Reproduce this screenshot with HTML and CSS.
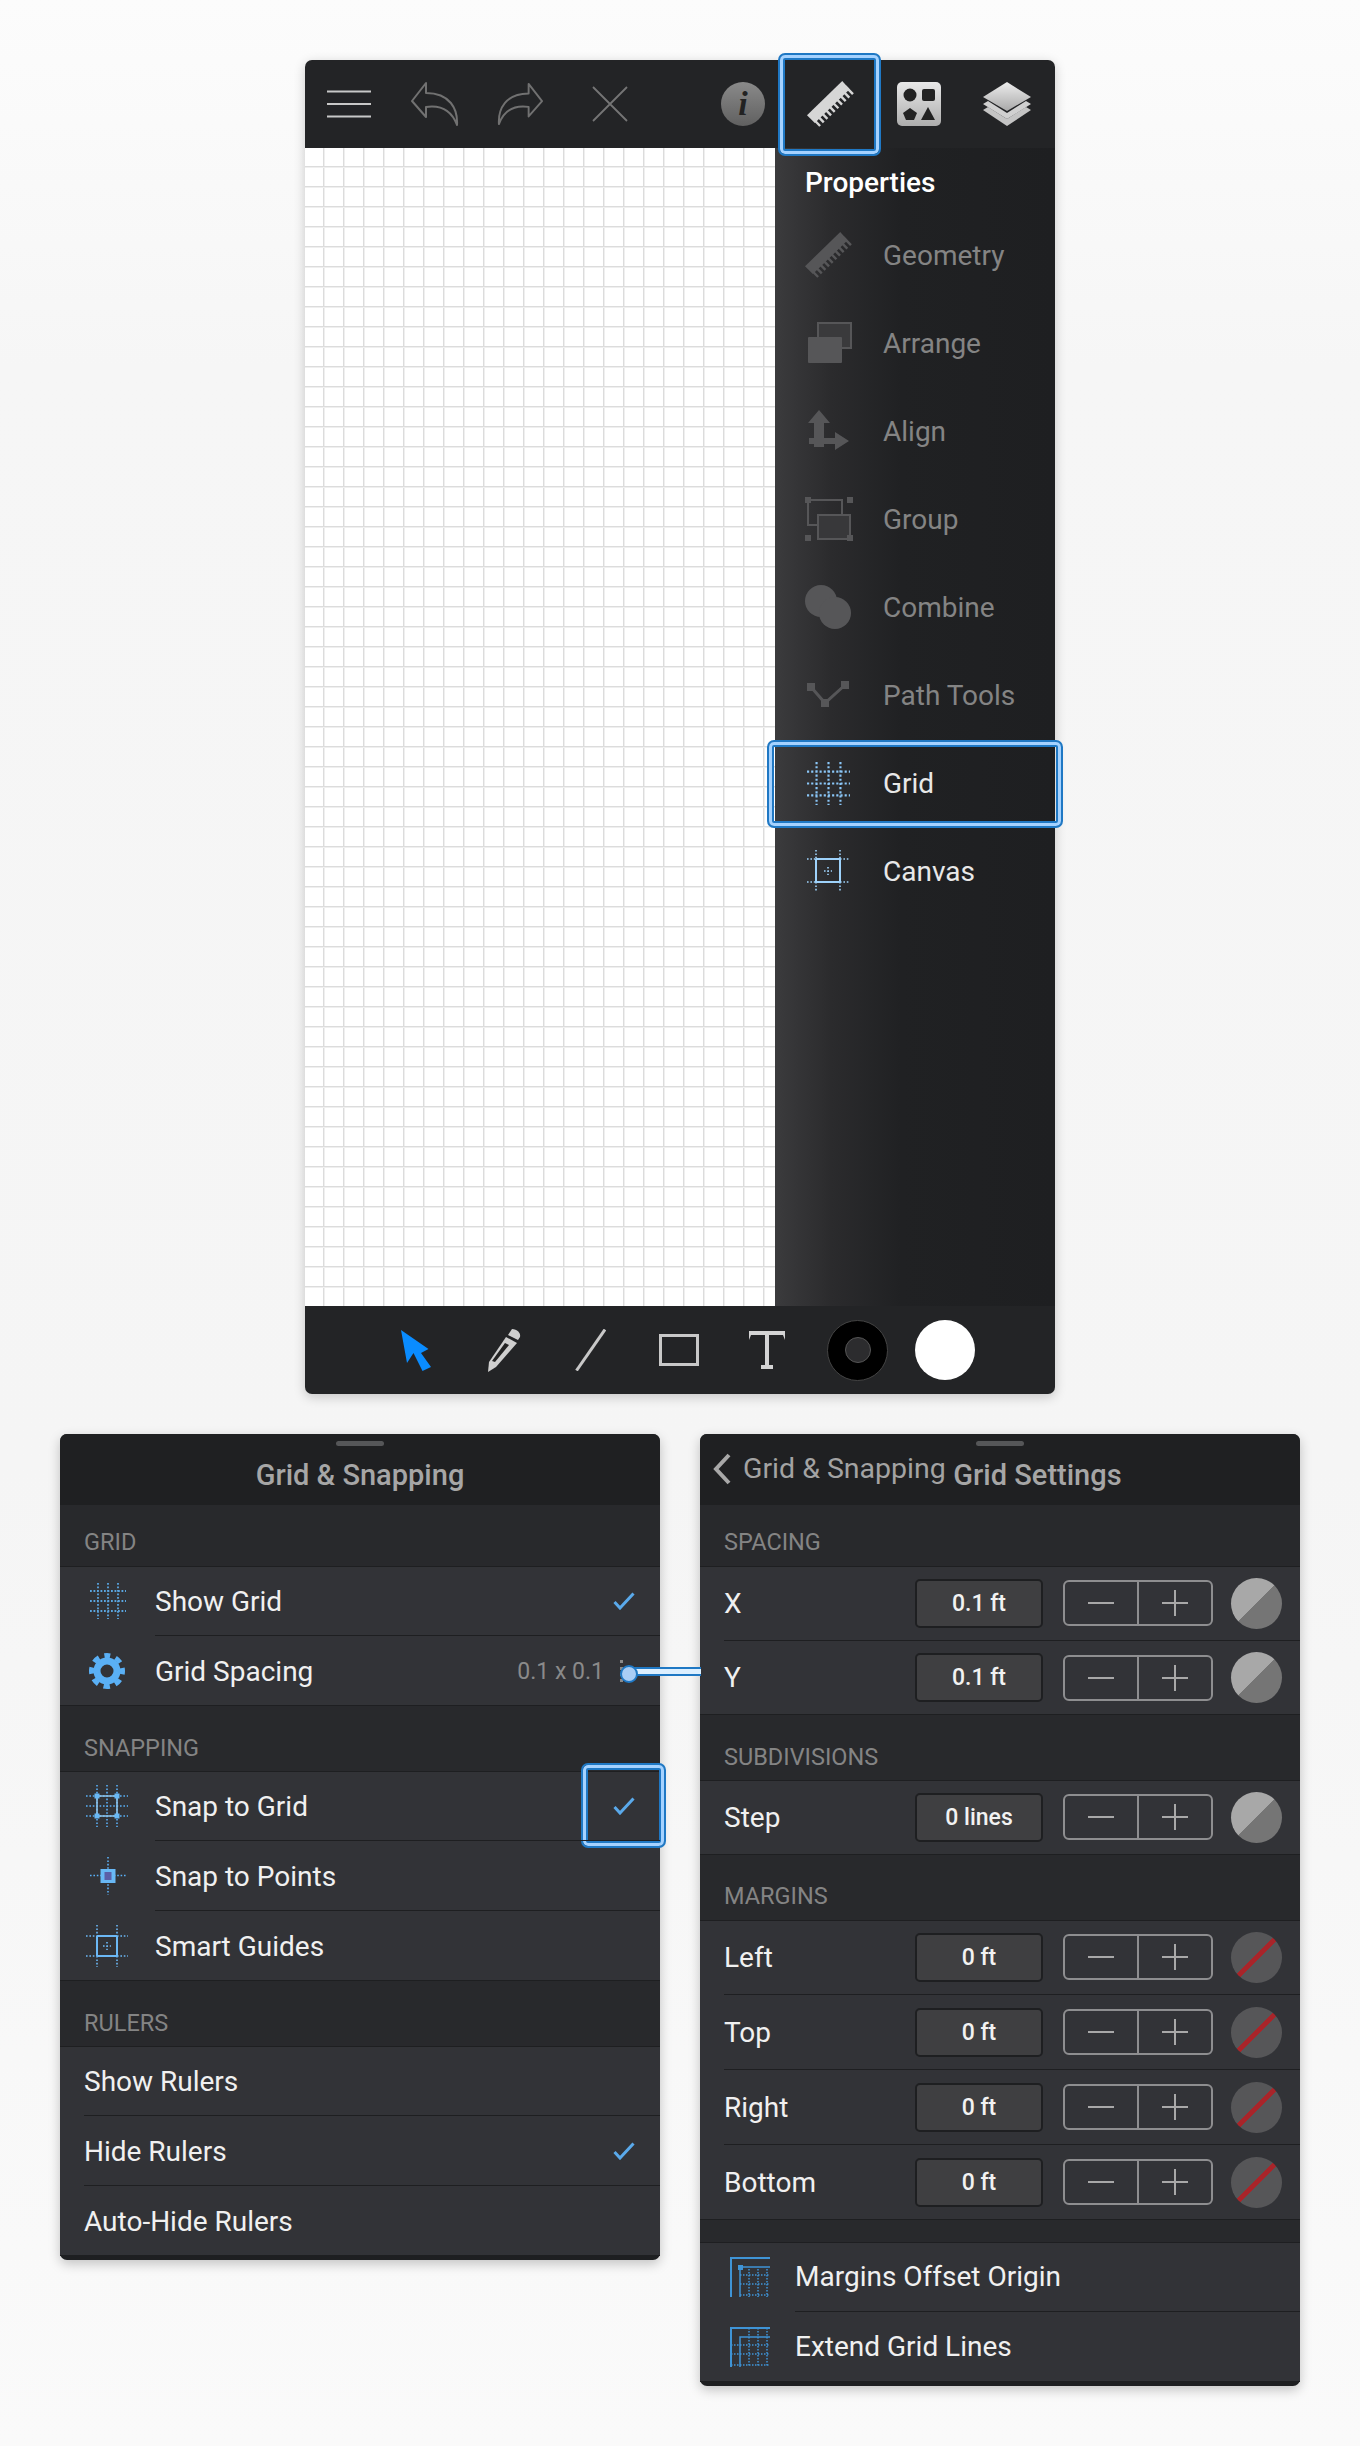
FILE: index.html
```html
<!DOCTYPE html>
<html>
  <head>
    <meta charset="utf-8" />
    <meta name="viewport" content="width=device-width, initial-scale=1" />
    <link rel="stylesheet" href="styles.css">
  </head>
  <body>
    <svg class="defs" width="0" height="0">
      <defs>
        <symbol id="ruler" viewBox="0 0 48 48">
          <path d="M42 6.500L6 41.500" stroke="currentColor" stroke-width="11" stroke-dasharray="2.500 2.700" fill="none" transform="translate(2 2)"/>
          <path d="M36 0L43.500 8.500 8 43 0 35z" fill="currentColor"/>
        </symbol>
        <symbol id="griddots" viewBox="0 0 36 36">
          <path d="M0 8H36M0 18H36M0 28H36M8 0V36M18 0V36M28 0V36" stroke="currentColor" stroke-width="1.800" stroke-dasharray="1.800 1.700" fill="none"/>
        </symbol>
        <symbol id="canvas" viewBox="0 0 42 42">
          <g stroke="currentColor" fill="none">
            <path d="M11 11H31M11 31H31M11 11V31M31 11V31" stroke-width="2"/>
            <path d="M0 11H11M31 11H42M0 31H11M31 31H42M11 0V11M31 0V11M11 31V42M31 31V42M21 17V25M17 21H25" stroke-width="1.600" stroke-dasharray="1.600 1.800"/>
          </g>
        </symbol>
        <linearGradient id="shapesfill" x1="0" y1="0" x2="0" y2="1">
          <stop offset="0" stop-color="#e8e8e8"/>
          <stop offset="1" stop-color="#adadad"/>
        </linearGradient>
        <linearGradient id="layerfill" x1="0" y1="0" x2="0" y2="1">
          <stop offset="0" stop-color="#ededed"/>
          <stop offset="1" stop-color="#a9a9a9"/>
        </linearGradient>
      </defs>
    </svg>

    <main class="app">
      <header class="bar bar-top">
        <div class="bar-left">
          <svg class="ic-menu" viewBox="0 0 44 28"><path d="M0 1.500H44M0 14H44M0 26.500H44" stroke="#c8c8c8" stroke-width="2" fill="none"/></svg>
          <svg class="ic-undo" viewBox="0 0 48 44"><path d="M15 1L1 19l14 16V25c14-2 25 2 31 18 1-16-7-32-31-32z" stroke="#717171" stroke-width="2" fill="none" stroke-linejoin="round"/></svg>
          <svg class="ic-redo" viewBox="0 0 48 44"><path d="M33 1l14 18-14 16V25C19 23 8 27 2 43 1 27 9 11 33 11z" stroke="#717171" stroke-width="2" fill="none" stroke-linejoin="round"/></svg>
          <svg class="ic-close" viewBox="0 0 36 36"><path d="M1 1L35 35M35 1L1 35" stroke="#757575" stroke-width="1.800" fill="none"/></svg>
        </div>
        <div class="bar-right">
          <span class="ic-info">i</span>
          <span class="tab-ruler">
            <svg class="ic-ruler"><use href="#ruler"/></svg>
            <span class="hl hl-ruler"></span>
          </span>
          <svg class="ic-shapes" viewBox="0 0 44 44">
            <rect width="44" height="44" rx="5" fill="url(#shapesfill)"/>
            <circle cx="13" cy="13" r="6.500" fill="#222"/>
            <rect x="25" y="7" width="13" height="12" rx="2" fill="#222"/>
            <path d="M13 26l7 5-3 7H9l-3-7z" fill="#222"/>
            <path d="M31 25l7 13H24z" fill="#222"/>
          </svg>
          <svg class="ic-layers" viewBox="0 0 48 44">
            <path d="M5 25l19 12 19-12 5 3-24 16L0 28z" fill="#c4c4c4"/>
            <path d="M5 19l19 12 19-12 5 3-24 15L0 22z" fill="#d0d0d0"/>
            <path d="M24 0L48 15 24 29 0 15z" fill="url(#layerfill)"/>
          </svg>
        </div>
      </header>

      <div class="stage">
        <div class="canvas"></div>
        <aside class="props">
          <h2 class="props-title">Properties</h2>
          <ul class="props-list">
            <li class="prop off">
              <svg class="prop-ic ic-ruler-off"><use href="#ruler"/></svg>
              <span>Geometry</span>
            </li>
            <li class="prop off">
              <svg class="prop-ic" viewBox="-2 -2 48 46">
                <rect x="11" y="1" width="33" height="25" fill="#3a3a3c" stroke="currentColor" stroke-width="2"/>
                <rect x="1" y="15" width="34" height="26" rx="1" fill="currentColor"/>
              </svg>
              <span>Arrange</span>
            </li>
            <li class="prop off">
              <svg class="prop-ic" viewBox="-3 -2 48 46">
                <path d="M11 0l11 13h-6v15h11v-6l14 9-14 9v-6H16v3H6v-3H1V28h5V13H0z" fill="currentColor"/>
              </svg>
              <span>Align</span>
            </li>
            <li class="prop off">
              <svg class="prop-ic" viewBox="0 -1 48 46">
                <path d="M3 3H37V18M3 3V28H12" stroke="currentColor" stroke-width="2" fill="none"/>
                <rect x="13" y="18" width="32" height="24" fill="#38383a" stroke="currentColor" stroke-width="2"/>
                <path d="M0 0h6v6H0zM42 0h6v6h-6zM0 38h6v6H0zM42 38h6v6h-6z" fill="currentColor"/>
              </svg>
              <span>Group</span>
            </li>
            <li class="prop off">
              <svg class="prop-ic" viewBox="0 -1 48 46">
                <circle cx="16" cy="16" r="16" fill="currentColor"/>
                <circle cx="30" cy="28" r="16" fill="currentColor"/>
              </svg>
              <span>Combine</span>
            </li>
            <li class="prop off">
              <svg class="prop-ic" viewBox="-2 -9 48 46">
                <path d="M4 6L18 22 38 4" stroke="currentColor" stroke-width="3" fill="none"/>
                <path d="M0 2h8v8H0zM14 18h8v8h-8zM34 0h8v8h-8z" fill="currentColor"/>
              </svg>
              <span>Path Tools</span>
            </li>
            <li class="prop on">
              <svg class="prop-ic ic-grid"><use href="#griddots"/></svg>
              <span>Grid</span>
              <span class="hl hl-grid"></span>
            </li>
            <li class="prop on">
              <svg class="prop-ic ic-canvas" viewBox="0 0 42 42">
                <path d="M9 9H33M9 32H33M9 9V32M33 9V32" stroke="#9ed2fb" stroke-width="2" fill="none"/>
                <path d="M0 9H9M33 9H42M0 32H9M33 32H42M9 0V9M33 0V9M9 32V42M33 32V42M21 17V25M17 21H25" stroke="#9ed2fb" stroke-width="1.600" stroke-dasharray="1.600 1.800" fill="none"/>
              </svg>
              <span>Canvas</span>
            </li>
          </ul>
        </aside>
      </div>

      <footer class="bar bar-bottom">
        <svg class="ic-arrow" viewBox="0 0 30 41"><path d="M0 0L27.500 19 20 23 30 37 21.500 41 12.500 23 6 33z" fill="#0a8cff"/></svg>
        <svg class="ic-pencil" viewBox="0 0 33 43">
          <path d="M24 0c5 0 9 4 8 8l-2 3-10-5z" fill="#cfcfcf"/>
          <path d="M18 8l11 6L8 38l-8 5 1-10z" fill="#cfcfcf"/>
          <path d="M17 14l4 2L7 33l-3-1z" fill="#222"/>
        </svg>
        <svg class="ic-line" viewBox="0 0 31 42"><path d="M30 0.500L1.500 41.500" stroke="#c8c8c8" stroke-width="3" fill="none"/></svg>
        <span class="ic-rect"></span>
        <svg class="ic-t" viewBox="0 0 36 38">
          <path d="M0 0H36V9L34 4H20V34H24V38H12V34H16V4H2L0 9z" fill="#d4d4d4"/>
        </svg>
        <span class="swatch-stroke"><span></span></span>
        <span class="swatch-fill"></span>
      </footer>
    </main>

    <div class="panels">
      <section class="panel">
        <div class="grip"></div>
        <h3 class="panel-title">Grid &amp; Snapping</h3>

        <h4 class="sec sec-first">GRID</h4>
        <div class="rows">
          <div class="row ind">
            <svg class="row-ic ic-griddots"><use href="#griddots"/></svg>
            <span class="row-label">Show Grid</span>
            <svg class="check" viewBox="0 0 22 18"><path d="M1.500 10L7 16 20.500 1.500" stroke="#5aa9ea" stroke-width="3" fill="none"/></svg>
          </div>
          <div class="row ind">
            <svg class="row-ic ic-gear" viewBox="0 0 36 36">
              <circle cx="18" cy="18" r="15.500" stroke="#5ab0f5" stroke-width="5" stroke-dasharray="6.500 5.670" stroke-dashoffset="3.250" fill="none" transform="rotate(-90 18 18)"/>
              <circle cx="18" cy="18" r="10" stroke="#5ab0f5" stroke-width="7" fill="none"/>
            </svg>
            <span class="row-label">Grid Spacing</span>
            <span class="row-value">0.1 x 0.1</span>
            <span class="link-dots"></span>
            <span class="link"></span>
          </div>
        </div>

        <h4 class="sec">SNAPPING</h4>
        <div class="rows">
          <div class="row ind">
            <svg class="row-ic ic-snap" viewBox="0 0 42 42">
              <g stroke="#5ab0f5" fill="none">
                <path d="M0 11H42M0 21H42M0 31H42M11 0V42M21 0V42M31 0V42" stroke-width="1.600" stroke-dasharray="1.600 1.800"/>
                <path d="M11 11H31M11 31H31M11 11V31M31 11V31" stroke="#8cc4ec" stroke-width="1.600"/>
              </g>
              <path fill="#68b8f5" d="M8.500 8.500h5v5h-5zM28.500 8.500h5v5h-5zM8.500 28.500h5v5h-5zM28.500 28.500h5v5h-5z"/>
            </svg>
            <span class="row-label">Snap to Grid</span>
            <svg class="check" viewBox="0 0 22 18"><path d="M1.500 10L7 16 20.500 1.500" stroke="#5aa9ea" stroke-width="3" fill="none"/></svg>
            <span class="hl hl-check"></span>
          </div>
          <div class="row ind">
            <svg class="row-ic ic-point" viewBox="0 0 36 38">
              <path d="M0 18.500H36M18 0V38" stroke="#5ab0f5" stroke-width="1.600" stroke-dasharray="1.600 1.800" fill="none"/>
              <rect x="10.500" y="12" width="15" height="14" fill="#68b8f5"/>
              <rect x="14.500" y="15" width="7" height="8" fill="#5b5fa8"/>
            </svg>
            <span class="row-label">Snap to Points</span>
          </div>
          <div class="row ind">
            <svg class="row-ic ic-guides"><use href="#canvas"/></svg>
            <span class="row-label">Smart Guides</span>
          </div>
        </div>

        <h4 class="sec">RULERS</h4>
        <div class="rows">
          <div class="row"><span class="row-label">Show Rulers</span></div>
          <div class="row">
            <span class="row-label">Hide Rulers</span>
            <svg class="check" viewBox="0 0 22 18"><path d="M1.500 10L7 16 20.500 1.500" stroke="#5aa9ea" stroke-width="3" fill="none"/></svg>
          </div>
          <div class="row"><span class="row-label">Auto-Hide Rulers</span></div>
        </div>
      </section>

      <section class="panel">
        <div class="grip"></div>
        <div class="back">
          <svg class="chev" viewBox="0 0 20 32"><path d="M17 2L4 16 17 30" stroke="#a8a8a8" stroke-width="4" fill="none"/></svg>
          <span>Grid &amp; Snapping</span>
        </div>
        <h3 class="panel-title title-r">Grid Settings</h3>

        <h4 class="sec sec-first">SPACING</h4>
        <div class="rows">
          <div class="row tall">
            <span class="row-label">X</span>
            <span class="field">0.1 ft</span>
            <span class="stepper"><i class="minus"></i><i class="plus"></i></span>
            <span class="dial"></span>
          </div>
          <div class="row tall">
            <span class="row-label">Y</span>
            <span class="field">0.1 ft</span>
            <span class="stepper"><i class="minus"></i><i class="plus"></i></span>
            <span class="dial"></span>
          </div>
        </div>

        <h4 class="sec">SUBDIVISIONS</h4>
        <div class="rows">
          <div class="row tall">
            <span class="row-label">Step</span>
            <span class="field">0 lines</span>
            <span class="stepper"><i class="minus"></i><i class="plus"></i></span>
            <span class="dial"></span>
          </div>
        </div>

        <h4 class="sec">MARGINS</h4>
        <div class="rows">
          <div class="row mid">
            <span class="row-label">Left</span>
            <span class="field">0 ft</span>
            <span class="stepper"><i class="minus"></i><i class="plus"></i></span>
            <span class="dial none"></span>
          </div>
          <div class="row mid">
            <span class="row-label">Top</span>
            <span class="field">0 ft</span>
            <span class="stepper"><i class="minus"></i><i class="plus"></i></span>
            <span class="dial none"></span>
          </div>
          <div class="row mid">
            <span class="row-label">Right</span>
            <span class="field">0 ft</span>
            <span class="stepper"><i class="minus"></i><i class="plus"></i></span>
            <span class="dial none"></span>
          </div>
          <div class="row mid">
            <span class="row-label">Bottom</span>
            <span class="field">0 ft</span>
            <span class="stepper"><i class="minus"></i><i class="plus"></i></span>
            <span class="dial none"></span>
          </div>
        </div>

        <div class="gap"></div>
        <div class="rows">
          <div class="row ind">
            <svg class="row-ic ic-margin" viewBox="0 0 40 40">
              <path d="M1 40V1H40" stroke="#3f94d6" stroke-width="2" fill="none"/>
              <path d="M10 40V10H40" stroke="#3f94d6" stroke-width="1.500" fill="none"/>
              <rect x="8" y="8" width="5" height="5" fill="#3f94d6"/>
              <path d="M10 18H40M10 27H40M10 38H40M19 12V40M28 12V40M37 12V40" stroke="#3f94d6" stroke-width="1.500" stroke-dasharray="1.500 1.500" fill="none"/>
            </svg>
            <span class="row-label">Margins Offset Origin</span>
          </div>
          <div class="row ind">
            <svg class="row-ic ic-margin" viewBox="0 0 40 40">
              <path d="M1 40V1H40" stroke="#3f94d6" stroke-width="2" fill="none"/>
              <path d="M10 40V10H40" stroke="#3f94d6" stroke-width="1.500" fill="none"/>
              <path d="M1 18H40M1 27H40M1 38H40M19 1V40M28 1V40M37 1V40" stroke="#3f94d6" stroke-width="1.500" stroke-dasharray="1.500 1.500" fill="none"/>
            </svg>
            <span class="row-label">Extend Grid Lines</span>
          </div>
        </div>
      </section>
    </div>
  </body>
</html>
```

FILE: styles.css
```css
* {
  box-sizing: border-box;
}
html,
body {
  margin: 0;
  padding: 0;
}
body {
  width: 1360px;
  height: 2446px;
  overflow: hidden;
  padding-top: 60px;
  background: linear-gradient(#fcfcfc, #f6f6f6 15%, #f5f5f5 60%, #fafafa);
  font-family: Roboto, "Liberation Sans", sans-serif;
  color: #f0f0f0;
}
.defs {
  position: absolute;
}
h2,
h3,
h4,
ul {
  margin: 0;
  padding: 0;
  font-weight: 400;
}
ul {
  list-style: none;
}

/* main window */
.app {
  position: relative;
  width: 750px;
  height: 1334px;
  margin-left: 305px;
  border-radius: 7px;
  background: #232426;
  box-shadow: 0 3px 12px rgba(0, 0, 0, 0.2);
  display: flex;
  flex-direction: column;
}
.bar {
  height: 88px;
  flex: none;
  display: flex;
  align-items: center;
}
.bar-top {
  justify-content: space-between;
}
.bar-left {
  display: flex;
  align-items: center;
  padding-left: 22px;
}
.ic-menu {
  width: 44px;
  height: 28px;
}
.ic-undo {
  width: 48px;
  height: 44px;
  margin-left: 40px;
}
.ic-redo {
  width: 46px;
  height: 44px;
  margin-left: 38px;
}
.ic-close {
  width: 36px;
  height: 36px;
  margin-left: 49px;
}
.bar-right {
  display: flex;
  align-items: center;
  padding-right: 24px;
}
.ic-info {
  width: 44px;
  height: 44px;
  border-radius: 50%;
  background: linear-gradient(#8a8a8a, #606060);
  color: #222;
  font: italic 700 34px/44px "Liberation Serif", serif;
  text-align: center;
}
.tab-ruler {
  position: relative;
  width: 47px;
  height: 47px;
  margin-left: 42px;
}
.ic-ruler {
  display: block;
  width: 47px;
  height: 47px;
  color: #d6d6d6;
}
.ic-shapes {
  width: 44px;
  height: 44px;
  margin-left: 43px;
}
.ic-layers {
  width: 48px;
  height: 44px;
  margin-left: 42px;
}

/* highlight frames */
.hl {
  position: absolute;
  border: 2px solid #1f78c4;
  border-radius: 7px;
  box-shadow: inset 0 0 0 3px #a5d2ff, inset 0 0 0 5px #1f78c4;
  pointer-events: none;
}
.hl-ruler {
  left: -29px;
  top: -28px;
  width: 103px;
  height: 103px;
}
.hl-grid {
  left: -38px;
  top: 1px;
  width: 296px;
  height: 88px;
}
.hl-check {
  right: -6px;
  top: -8px;
  width: 85px;
  height: 85px;
}

.stage {
  flex: 1;
  display: flex;
  min-height: 0;
}
.canvas {
  width: 470px;
  background-color: #fff;
  background-image: linear-gradient(#dcdcdc 1px, #efefef 1px, #efefef 2px, transparent 2px),
    linear-gradient(90deg, #dcdcdc 1px, #efefef 1px, #efefef 2px, transparent 2px);
  background-size: 20px 20px;
  background-position: 18px 18px;
}
.props {
  width: 280px;
  padding: 0 0 0 30px;
  background: linear-gradient(90deg, #3b3b3d, #2b2b2d 20%, #202123 45%, #1e1f21);
}
.props-title {
  font-size: 28px;
  font-weight: 500;
  line-height: 34px;
  padding-top: 18px;
  color: #fff;
}
.props-list {
  padding-top: 11px;
}
.prop {
  position: relative;
  height: 88px;
  display: flex;
  align-items: center;
  font-size: 28px;
  color: #e8e8e8;
}
.prop.off {
  color: #848484;
}
.prop-ic {
  width: 48px;
  height: 46px;
  margin-right: 30px;
  flex: none;
  color: #565658;
}
.ic-ruler-off {
  width: 47px;
  height: 47px;
  margin-right: 31px;
}
.prop .ic-grid {
  width: 43px;
  height: 43px;
  margin: 0 33px 0 2px;
  color: #8ac6f7;
}
.prop .ic-canvas {
  width: 42px;
  height: 42px;
  margin: 0 34px 0 2px;
}

.bar-bottom {
  padding-left: 96px;
  border-radius: 0 0 7px 7px;
}
.ic-arrow {
  width: 30px;
  height: 41px;
}
.ic-pencil {
  width: 33px;
  height: 43px;
  margin-left: 57px;
}
.ic-line {
  width: 31px;
  height: 42px;
  margin-left: 54px;
}
.ic-rect {
  width: 40px;
  height: 32px;
  margin-left: 53px;
  border: 3px solid #c8c8c8;
}
.ic-t {
  width: 36px;
  height: 38px;
  margin-left: 50px;
}
.swatch-stroke {
  width: 61px;
  height: 61px;
  margin-left: 42px;
  border-radius: 50%;
  background: #000;
  border: 1px solid #444;
  display: flex;
  align-items: center;
  justify-content: center;
}
.swatch-stroke span {
  width: 26px;
  height: 26px;
  border-radius: 50%;
  background: #2c2c2e;
  border: 1px solid #555;
}
.swatch-fill {
  width: 60px;
  height: 60px;
  margin-left: 27px;
  border-radius: 50%;
  background: #fff;
}

/* bottom panels */
.panels {
  display: flex;
  gap: 40px;
  padding-left: 60px;
  margin-top: 40px;
  align-items: flex-start;
}
.panel {
  position: relative;
  width: 600px;
  border-radius: 7px;
  background: #28292c;
  border-bottom: 4px solid #1e1f21;
  box-shadow: 0 4px 12px rgba(0, 0, 0, 0.22);
}
.grip {
  position: absolute;
  left: 276px;
  top: 7px;
  width: 48px;
  height: 5px;
  border-radius: 3px;
  background: #555658;
}
.panel-title {
  height: 71px;
  line-height: 82px;
  text-align: center;
  font-size: 29px;
  font-weight: 500;
  color: #a6a6a6;
  background: #1f2022;
  border-radius: 7px 7px 0 0;
}
.title-r {
  padding-left: 75px;
}
.back {
  position: absolute;
  left: 12px;
  top: 18px;
  display: flex;
  align-items: center;
  gap: 11px;
  font-size: 28.500px;
  color: #a3a3a3;
}
.chev {
  width: 20px;
  height: 32px;
}
.sec {
  height: 65px;
  padding: 28.500px 24px 0;
  font-size: 23.500px;
  line-height: 26px;
  color: #848484;
}
.sec-first {
  height: 61px;
  padding-top: 24px;
}
.rows {
  background: #323337;
  box-shadow: inset 0 1px #1e1f21, inset 0 -1px #1e1f21;
}
.row {
  position: relative;
  height: 70px;
  display: flex;
  align-items: center;
  padding: 0 24px;
  font-size: 28px;
  color: #f0f0f0;
}
.row + .row::before {
  content: "";
  position: absolute;
  left: 24px;
  right: 0;
  top: -1px;
  height: 1px;
  background: #1e1f21;
}
.row.ind {
  padding-left: 95px;
}
.row.ind + .row.ind::before {
  left: 95px;
}
.row.tall {
  height: 74.500px;
}
.row.mid {
  height: 75px;
}
.row-ic {
  position: absolute;
  left: 26px;
  top: 50%;
  transform: translateY(-50%);
}
.ic-griddots {
  left: 30px;
  width: 36px;
  height: 36px;
  color: #5aa6e0;
}
.ic-gear {
  left: 29px;
  width: 36px;
  height: 36px;
}
.ic-snap,
.ic-guides {
  width: 42px;
  height: 42px;
}
.ic-guides {
  color: #6cb8f5;
}
.ic-point {
  left: 30px;
  width: 36px;
  height: 38px;
}
.ic-margin {
  left: 30px;
  width: 40px;
  height: 40px;
}
.row-label {
  flex: 1;
}
.row-value {
  font-size: 23px;
  color: #8a8a8a;
  margin-right: 16px;
}
.check {
  width: 22px;
  height: 18px;
  margin-right: 1px;
}
.link-dots {
  width: 10px;
  height: 22px;
  margin-right: 6px;
  border-left: 3px dotted #8a8a8a;
}
.link {
  position: absolute;
  left: 569px;
  top: 31px;
  width: 72px;
  height: 9px;
  background: #dcefff;
  border-top: 2px solid #1f78c4;
  border-bottom: 2px solid #1f78c4;
  z-index: 3;
}
.link::before {
  content: "";
  position: absolute;
  left: -9px;
  top: -4.500px;
  width: 14px;
  height: 14px;
  border-radius: 50%;
  background: #a9cdf5;
  border: 2px solid #1f78c4;
}
.field {
  flex: none;
  width: 128px;
  height: 49px;
  margin-right: 20px;
  border: 2px solid #1e1f21;
  border-radius: 5px;
  background: #3f3f41;
  font-size: 23px;
  font-weight: 500;
  line-height: 45px;
  text-align: center;
  color: #f2f2f2;
}
.stepper {
  flex: none;
  width: 150px;
  height: 46px;
  display: flex;
  border: 2px solid #8e8e90;
  border-radius: 6px;
  margin-right: 18px;
}
.stepper i {
  position: relative;
  flex: 1;
}
.stepper .plus {
  border-left: 2px solid #8e8e90;
}
.stepper i::before,
.stepper .plus::after {
  content: "";
  position: absolute;
  left: 50%;
  top: 50%;
  width: 26px;
  height: 2px;
  margin: -1px 0 0 -13px;
  background: #a8a8a8;
}
.stepper .plus::after {
  width: 2px;
  height: 26px;
  margin: -13px 0 0 -1px;
}
.dial {
  flex: none;
  width: 51px;
  height: 51px;
  margin-right: -6px;
  border-radius: 50%;
  background: linear-gradient(135deg, #a8a8a8 0 49%, #757575 50%);
}
.dial.none {
  background: linear-gradient(135deg, #565658 0 47%, #a8252a 47% 53%, #565658 53%);
}
.gap {
  height: 22px;
}
```
